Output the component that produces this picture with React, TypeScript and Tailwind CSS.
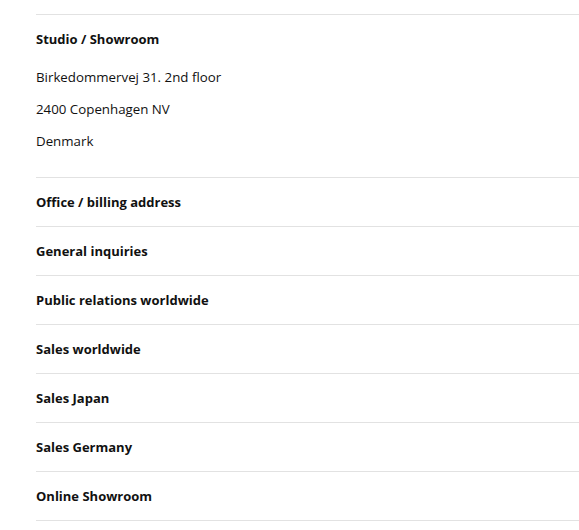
const sections = [
  "Office / billing address",
  "General inquiries",
  "Public relations worldwide",
  "Sales worldwide",
  "Sales Japan",
  "Sales Germany",
  "Online Showroom",
];

const address = ["Birkedommervej 31. 2nd floor", "2400 Copenhagen NV", "Denmark"];

export default function App() {
  return (
    <div className="min-h-[530px] bg-white pt-[14px] pl-9 font-['Open_Sans',sans-serif] text-[13.3px] text-[#111]">
      {/* open section */}
      <div className="border-t border-[#e2e2e2]">
        <h3 className="pt-3.5 text-[13px] font-bold leading-5">Studio / Showroom</h3>
        <div className="pt-3 pb-5">
          {address.map((line) => (
            <p key={line} className="leading-8">
              {line}
            </p>
          ))}
        </div>
      </div>
      {sections.map((s) => (
        <div key={s} className="border-t border-[#e2e2e2]">
          <h3 className="py-3.5 text-[13px] font-bold leading-5">{s}</h3>
        </div>
      ))}
      <div className="border-t border-[#e2e2e2]" />
    </div>
  );
}
